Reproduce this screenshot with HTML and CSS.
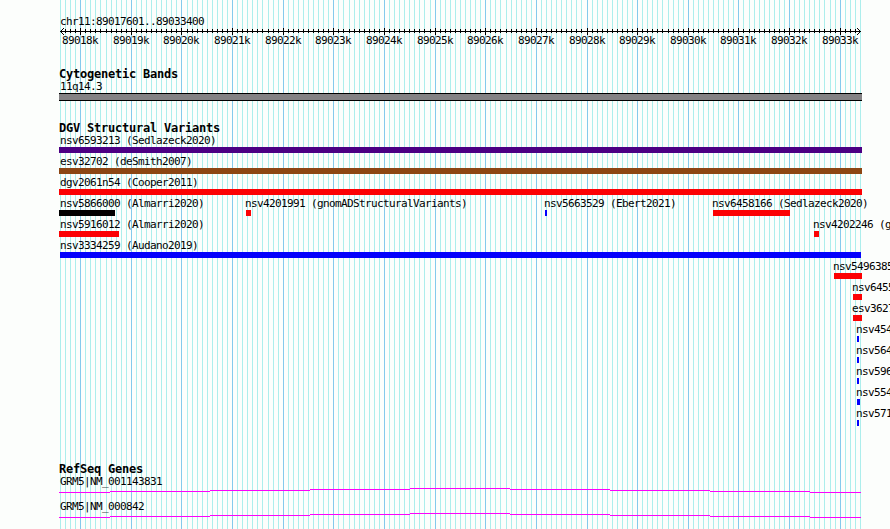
FILE: index.html
```html
<!DOCTYPE html>
<html lang="en">
<head>
<meta charset="utf-8">
<title>chr11:89017601..89033400</title>
<link rel="stylesheet" href="styles.css">
</head>
<body>
<svg class="grid" id="grid" width="890" height="529" shape-rendering="crispEdges" aria-hidden="true"></svg>
<main class="browser">
  <header class="ruler">
    <div class="label region">chr11:89017601..89033400</div>
    <svg class="axis" id="axis" width="890" height="7" shape-rendering="crispEdges" aria-hidden="true"></svg>
    <div class="ticks" id="ticks"></div>
  </header>
  <section class="track cyto">
    <h2>Cytogenetic Bands</h2>
    <div class="label">11q14.3</div>
    <div class="band"></div>
  </section>
  <section class="track variants">
    <h2>DGV Structural Variants</h2>
    <div id="lanes"></div>
  </section>
  <section class="track genes">
    <h2>RefSeq Genes</h2>
    <div class="gene">
      <div class="label">GRM5|NM_001143831</div>
      <svg class="intron" width="890" height="5" shape-rendering="crispEdges"></svg>
    </div>
    <div class="gene">
      <div class="label">GRM5|NM_000842</div>
      <svg class="intron" width="890" height="5" shape-rendering="crispEdges"></svg>
    </div>
  </section>
</main>
<script src="script.js"></script>
</body>
</html>
```
FILE: styles.css
```css
* { box-sizing: border-box; }
body {
  margin: 0;
  width: 890px;
  height: 529px;
  overflow: hidden;
  background: #fcfefc;
  color: #000;
  font-family: "DejaVu Sans Mono", "Liberation Mono", monospace;
}
svg { display: block; }
.grid { position: absolute; top: 0; left: 0; }
.grid .minor { fill: #aceeec; }
.grid .major { fill: #84caec; }
.browser { width: 890px; height: 529px; overflow: hidden; position: relative; padding-top: 16px; }
.label, .tick {
  font-size: 11px;
  line-height: 12px;
  letter-spacing: -0.622px;
  height: 12px;
  white-space: nowrap;
}
.label { padding-left: 60px; }
.ruler { height: 52px; }
.ticks { display: grid; }
.tick { grid-area: 1 / 1; width: 36px; }
h2 {
  margin: 0;
  padding-left: 59px;
  height: 13px;
  font-size: 12px;
  line-height: 13px;
  font-weight: 700;
  letter-spacing: -0.224px;
}
.cyto { height: 54px; }
.band {
  margin-left: 59px;
  width: 803px;
  height: 8px;
  background: #848284;
  border: solid #000;
  border-width: 1px 0;
}
.variants { height: 341px; }
.lane { display: grid; height: 21px; }
.feature { grid-area: 1 / 1; width: 0; }
.feature .label { padding-left: 0; }
.bar { height: 6px; }
.purple { background: #4c0084; }
.brown { background: #8c4614; }
.red { background: #fc0204; }
.black { background: #000; }
.blue { background: #0402fc; }
.gene { height: 25px; }
.intron { fill: #fc02fc; }
```
FILE: script.js
```js
const NS = 'http://www.w3.org/2000/svg';
function rect(svg, x, y, w, h, cls) {
  const r = document.createElementNS(NS, 'rect');
  r.setAttribute('x', x);
  r.setAttribute('y', y);
  r.setAttribute('width', w);
  r.setAttribute('height', h);
  if (cls) r.setAttribute('class', cls);
  svg.appendChild(r);
}

// Grid lines every 100 bp, heavier every 1 kb
const grid = document.getElementById('grid');
const axis = document.getElementById('axis');
const ticks = document.getElementById('ticks');
rect(axis, 60, 3, 801, 1);
for (let i = 0; i <= 158; i++) {
  const x = Math.floor(60.44 + i * 5.0633);
  const major = i % 10 === 4;
  rect(grid, x, 0, 1, 529, major ? 'major' : 'minor');
  if (i > 0 && i < 158) rect(axis, x, major ? 0 : 1, 1, major ? 7 : 4);
  if (major) {
    const t = document.createElement('div');
    t.className = 'tick';
    t.style.marginLeft = (x - 18) + 'px';
    t.textContent = (89018 + (i - 4) / 10) + 'k';
    ticks.appendChild(t);
  }
}
for (let d = 1; d <= 3; d++) {
  for (const s of [-1, 1]) {
    rect(axis, 60 + d, 3 + s * d, 1, 1);
    rect(axis, 860 - d, 3 + s * d, 1, 1);
  }
}

// Each lane holds features: label, label x, bar start, bar end, colour
const lanes = [
  [['nsv6593213 (Sedlazeck2020)', 60, 59, 862, 'purple']],
  [['esv32702 (deSmith2007)', 60, 59, 862, 'brown']],
  [['dgv2061n54 (Cooper2011)', 60, 59, 862, 'red']],
  [['nsv5866000 (Almarri2020)', 60, 59, 115, 'black'],
   ['nsv4201991 (gnomADStructuralVariants)', 245, 246, 251, 'red'],
   ['nsv5663529 (Ebert2021)', 544, 545, 547, 'blue'],
   ['nsv6458166 (Sedlazeck2020)', 712, 713, 790, 'red']],
  [['nsv5916012 (Almarri2020)', 60, 59, 119, 'red'],
   ['nsv4202246 (g', 813, 814, 819, 'red']],
  [['nsv3334259 (Audano2019)', 60, 60, 861, 'blue']],
  [['nsv5496385', 833, 834, 862, 'red']],
  [['nsv6455', 852, 853, 862, 'red']],
  [['esv3627', 852, 853, 862, 'red']],
  [['nsv454', 856, 857, 859, 'blue']],
  [['nsv564', 856, 857, 859, 'blue']],
  [['nsv596', 856, 857, 859, 'blue']],
  [['nsv554', 856, 857, 860, 'blue']],
  [['nsv571', 856, 857, 859, 'blue']]
];
const host = document.getElementById('lanes');
for (const lane of lanes) {
  const row = document.createElement('div');
  row.className = 'lane';
  for (const [name, lx, x1, x2, colour] of lane) {
    const f = document.createElement('div');
    f.className = 'feature';
    f.style.marginLeft = lx + 'px';
    const label = document.createElement('div');
    label.className = 'label';
    label.textContent = name;
    const bar = document.createElement('div');
    bar.className = 'bar ' + colour;
    bar.style.marginLeft = (x1 - lx) + 'px';
    bar.style.width = (x2 - x1) + 'px';
    f.append(label, bar);
    row.appendChild(f);
  }
  host.appendChild(row);
}

// Intron connector, rising to the centre in 1px steps
const steps = [59, 110, 210, 310, 410, 510, 610, 710, 810, 861];
for (const svg of document.querySelectorAll('.intron')) {
  for (let i = 0; i < 9; i++) {
    rect(svg, steps[i], Math.abs(4 - i), steps[i + 1] - steps[i], 1);
  }
}
```
